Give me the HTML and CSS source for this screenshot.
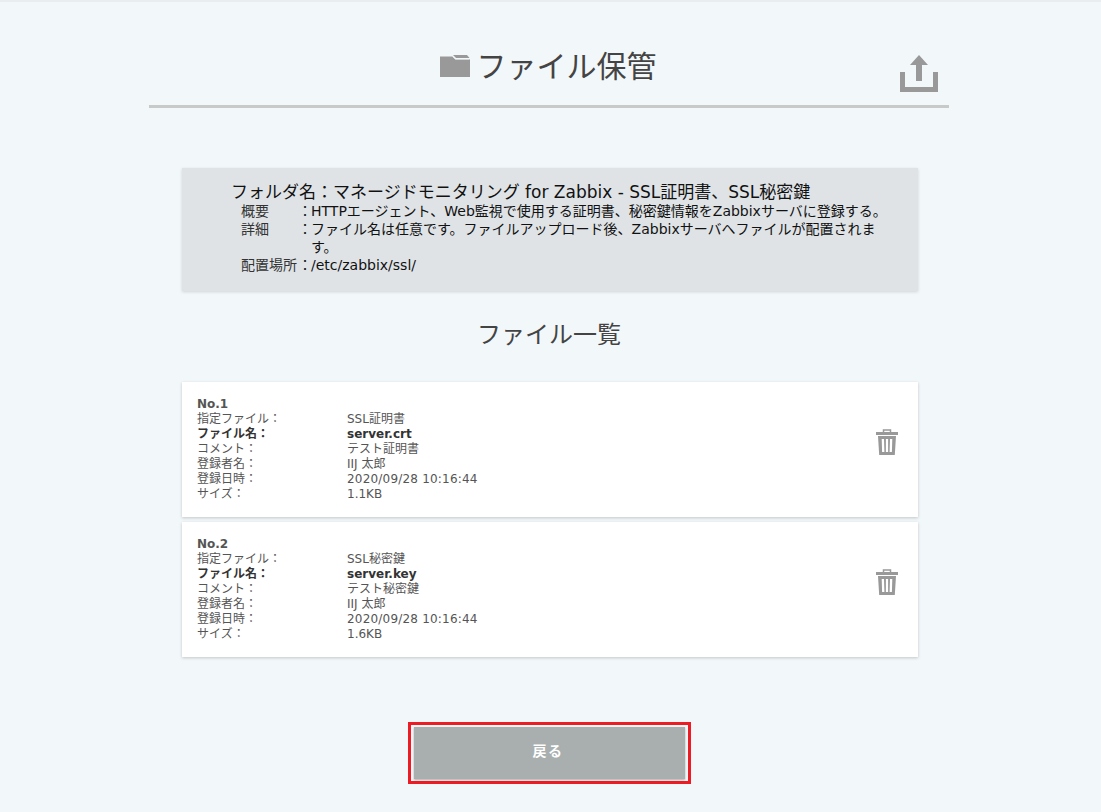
FILE: index.html
```html
<!DOCTYPE html>
<html lang="ja">
<head>
<meta charset="utf-8">
<title>ファイル保管</title>
<link rel="stylesheet" href="styles.css">
</head>
<body>
<div class="topline"></div>
<main class="page">
  <header class="head">
    <h1 class="title">
      <svg class="folder" viewBox="0 0 30 22" width="30" height="22"><path d="M0 1.500h12.500l2.800 2.700H30V22H0z" fill="#999"/><path d="M13 0h14l2.500 3H16z" fill="#999"/><path d="M12.500 1.200l3 2.800h14" fill="none" stroke="#f2f7fa" stroke-width="1"/></svg>
      <span>ファイル保管</span>
    </h1>
    <svg class="upload" viewBox="0 0 38 37" width="38" height="37"><path d="M19 0l9 10h-6v16h-6V10h-6z" fill="#999"/><path d="M2.500 17v17.500h33V17" fill="none" stroke="#999" stroke-width="5"/></svg>
  </header>

  <section class="info">
    <div class="info-title">フォルダ名：マネージドモニタリング for Zabbix - SSL証明書、SSL秘密鍵</div>
    <dl class="info-list">
      <dt>概要</dt><dd>HTTPエージェント、Web監視で使用する証明書、秘密鍵情報をZabbixサーバに登録する。</dd>
      <dt>詳細</dt><dd>ファイル名は任意です。ファイルアップロード後、Zabbixサーバへファイルが配置されます。</dd>
      <dt>配置場所</dt><dd>/etc/zabbix/ssl/</dd>
    </dl>
  </section>

  <h2 class="subtitle">ファイル一覧</h2>

  <section class="cards">
    <article class="card">
      <div class="meta">
        <div class="no">No.1</div>
        <div class="row"><span>指定ファイル：</span><span>SSL証明書</span></div>
        <div class="row strong"><span>ファイル名：</span><span>server.crt</span></div>
        <div class="row"><span>コメント：</span><span>テスト証明書</span></div>
        <div class="row"><span>登録者名：</span><span>IIJ 太郎</span></div>
        <div class="row"><span>登録日時：</span><span class="num">2020/09/28 10:16:44</span></div>
        <div class="row"><span>サイズ：</span><span>1.1KB</span></div>
      </div>
      <svg class="trash" viewBox="0 0 22 26" width="22" height="26"><path d="M7.500 3V1h7v2" fill="none" stroke="#999" stroke-width="1.500"/><path d="M0 3h22v3H0z" fill="#999"/><path d="M2 7h18l-1.200 19H3.200zM5.700 10l.4 13h2.300l-.4-13zM9.900 10v13h2.200V10zM14 10l-.4 13h2.300l.4-13z" fill="#999" fill-rule="evenodd"/></svg>
    </article>
    <article class="card">
      <div class="meta">
        <div class="no">No.2</div>
        <div class="row"><span>指定ファイル：</span><span>SSL秘密鍵</span></div>
        <div class="row strong"><span>ファイル名：</span><span>server.key</span></div>
        <div class="row"><span>コメント：</span><span>テスト秘密鍵</span></div>
        <div class="row"><span>登録者名：</span><span>IIJ 太郎</span></div>
        <div class="row"><span>登録日時：</span><span class="num">2020/09/28 10:16:44</span></div>
        <div class="row"><span>サイズ：</span><span>1.6KB</span></div>
      </div>
      <svg class="trash" viewBox="0 0 22 26" width="22" height="26"><path d="M7.500 3V1h7v2" fill="none" stroke="#999" stroke-width="1.500"/><path d="M0 3h22v3H0z" fill="#999"/><path d="M2 7h18l-1.200 19H3.200zM5.700 10l.4 13h2.300l-.4-13zM9.900 10v13h2.200V10zM14 10l-.4 13h2.300l.4-13z" fill="#999" fill-rule="evenodd"/></svg>
    </article>
  </section>

  <div class="actions">
    <div class="highlight"><button class="back">戻る</button></div>
  </div>
</main>
</body>
</html>
```

FILE: styles.css
```css
* { box-sizing: border-box; }
html, body { margin: 0; padding: 0; }
body {
  height: 812px;
  overflow: hidden;
  background: #f2f7fa;
  color: #444;
  font-family: "DejaVu Sans", "Noto Sans CJK JP", sans-serif;
}
.topline { height: 2px; background: #e9edf0; }
.page { width: 800px; margin-left: 149px; }
.head {
  position: relative;
  height: 108px;
  margin-top: -2px;
  padding-top: 42px;
  border-bottom: 3px solid #c8caca;
}
.title {
  display: flex;
  align-items: center;
  justify-content: center;
  gap: 8px;
  margin: 0;
  height: 44px;
  font-size: 30px;
  font-weight: 400;
  color: #444;
  font-family: "Noto Sans CJK JP", sans-serif;
}
.folder { display: block; margin: 3px 0 0 -2px; margin-right: -1px; }
.upload { position: absolute; right: 11px; top: 55px; }
.info {
  width: 736px;
  height: 123px;
  margin: 60px 0 0 33px;
  padding: 14px 30px 0 49px;
  background: #dfe3e6;
  color: #111;
  box-shadow: 0 1px 3px rgba(0,0,0,.14);
}
.info-title { font-size: 17px; line-height: 20px; white-space: nowrap; font-family: "DejaVu Sans", "Noto Sans CJK JP", sans-serif; }
.info-list {
  display: grid;
  grid-template-columns: 70px 1fr;
  margin: 0 0 0 10px;
  font-size: 14px;
  line-height: 18px;
  font-family: "DejaVu Sans", "Noto Sans CJK JP", sans-serif;
}
.info-list dt { position: relative; color: #333; }
.info-list dt::after { content: "："; position: absolute; left: 57px; color: #111; }
.info-list dd { margin: 0; }
.subtitle {
  margin: 24px 0 0;
  height: 65px;
  font-size: 24px;
  line-height: 36px;
  font-weight: 400;
  text-align: center;
  color: #444;
  font-family: "Noto Sans CJK JP", sans-serif;
}
.cards { width: 736px; margin: 0 0 0 33px; display: flex; flex-direction: column; gap: 5px; padding-top: 2px; }
.card {
  display: flex;
  align-items: flex-start;
  justify-content: space-between;
  height: 135px;
  padding: 15px 20px 0 15px;
  background: #fff;
  box-shadow: 0 1px 3px rgba(0,0,0,.2);
}
.meta { font-size: 12px; line-height: 15px; color: #555; font-family: "DejaVu Sans", "Noto Sans CJK JP", sans-serif; }
.no { font-weight: 700; }
.row { display: grid; grid-template-columns: 150px auto; }
.strong { font-weight: 700; color: #333; }
.num { letter-spacing: .2px; }
.trash { display: block; margin-top: 32px; }
.actions { display: flex; justify-content: center; margin-top: 65px; padding-left: 1px; }
.highlight { width: 283px; height: 62px; border: 3px solid #ed1c24; padding: 2px 3px; }
.back {
  display: block;
  width: 100%;
  height: 100%;
  border: 0;
  padding: 0 3px 7px 0;
  background: #a9afaf;
  color: #fff;
  font-family: "Noto Sans CJK JP", sans-serif;
  font-size: 14px;
  font-weight: 700;
  letter-spacing: 1.5px;
  box-shadow: 0 1px 2px rgba(0,0,0,.3);
}
```
